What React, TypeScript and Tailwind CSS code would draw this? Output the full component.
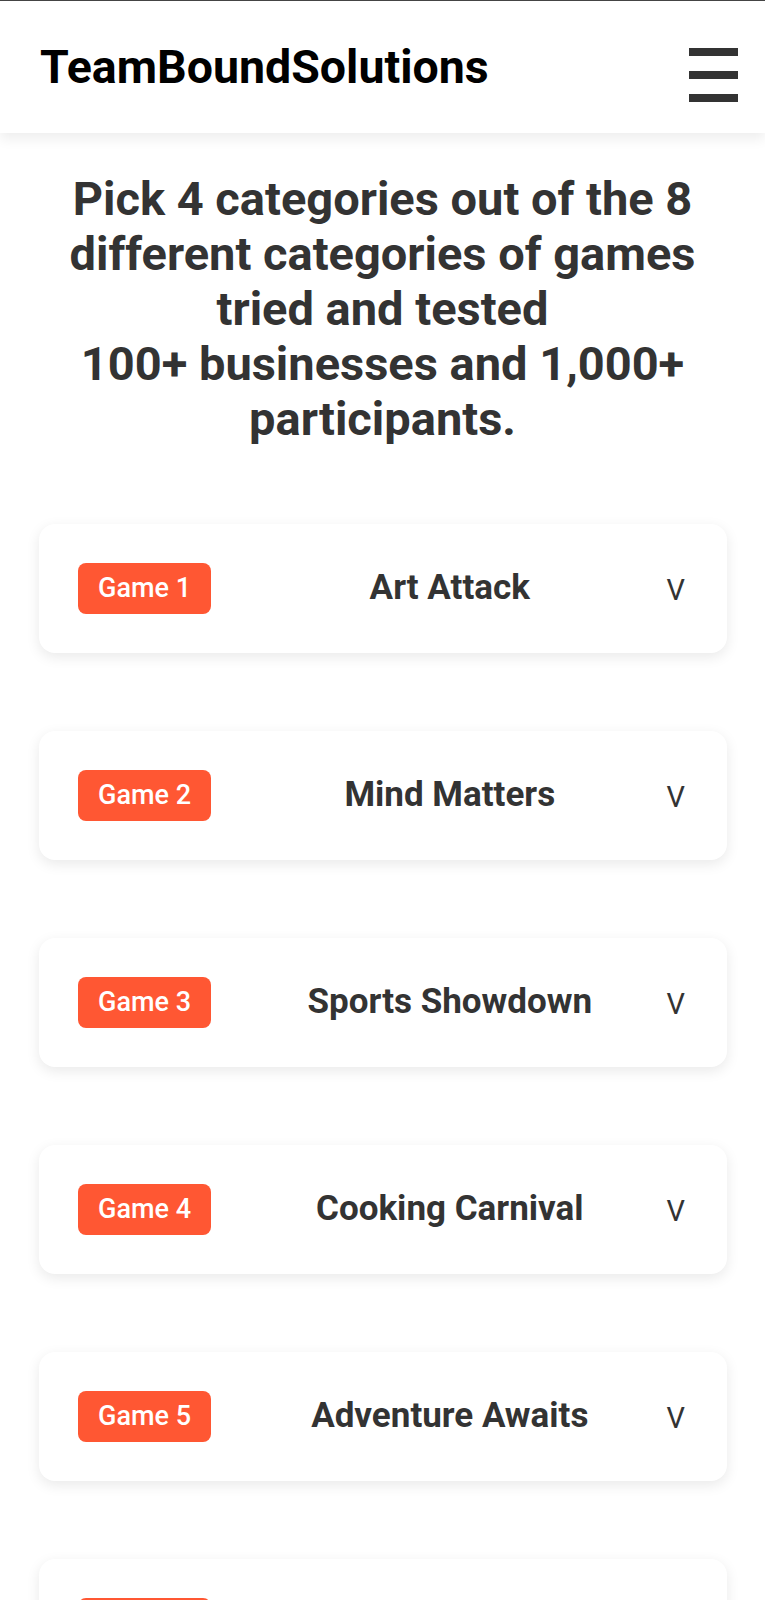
import React from 'react';

const games = [
  { id: 1, title: 'Art Attack' },
  { id: 2, title: 'Mind Matters' },
  { id: 3, title: 'Sports Showdown' },
  { id: 4, title: 'Cooking Carnival' },
  { id: 5, title: 'Adventure Awaits' },
  { id: 6, title: 'Trivia Time' },
  { id: 7, title: 'Music Mania' },
  { id: 8, title: 'Puzzle Quest' },
];

function Header() {
  return (
    <header className="relative z-10 flex h-[133px] items-center justify-between border-t border-[#444] bg-white pl-[40px] pr-[27px] shadow-[0_6px_12px_rgba(0,0,0,0.07)]">
      <div className="text-[46.5px] font-bold leading-none text-black">TeamBoundSolutions</div>
      <button className="mt-[16px] flex flex-col gap-[15px]" aria-label="Menu">
        <span className="block h-[8px] w-[49px] bg-[#333]" />
        <span className="block h-[8px] w-[49px] bg-[#333]" />
        <span className="block h-[8px] w-[49px] bg-[#333]" />
      </button>
    </header>
  );
}

function GameCard({ id, title }: { id: number; title: string }) {
  return (
    <div className="mx-[39px] mr-[38px] flex h-[129px] items-center rounded-2xl bg-white pl-[39px] pr-[42px] shadow-[0_4px_14px_rgba(0,0,0,0.09)]">
      <div className="flex h-[51px] w-[133px] items-center justify-center rounded-[8px] bg-[#ff5733] text-[27px] font-medium text-white">
        Game {id}
      </div>
      <div className="flex-1 pl-[22px] text-center text-[35px] font-bold text-[#333]">{title}</div>
      <div className="pt-[4px] text-[29px] leading-none text-[#333]">V</div>
    </div>
  );
}

export default function App() {
  return (
    <div className="min-h-screen bg-white font-['Roboto',sans-serif]">
      <Header />
      <main className="pb-[80px]">
        <h1 className="mx-auto mt-[38px] text-center text-[47px] font-bold leading-[55px] text-[#333]">
          Pick 4 categories out of the 8
          <br />
          different categories of games
          <br />
          tried and tested
          <br />
          100+ businesses and 1,000+
          <br />
          participants.
        </h1>
        <div className="mt-[78px] flex flex-col gap-[78px]">
          {games.map((g) => (
            <GameCard key={g.id} id={g.id} title={g.title} />
          ))}
        </div>
      </main>
    </div>
  );
}
